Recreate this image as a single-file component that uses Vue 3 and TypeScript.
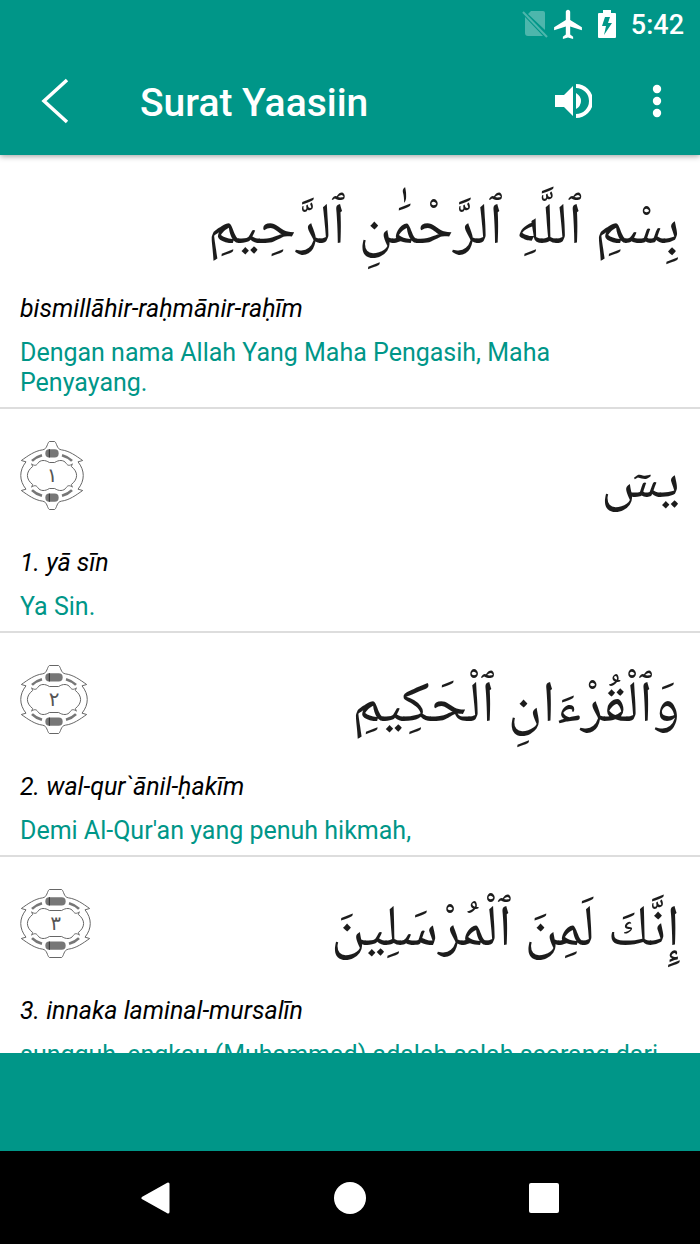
<script setup lang="ts">
interface Verse {
  marker: string
  frameWidth: number
  arabic: string
  latin: string
  meaning: string
}

const verses: Verse[] = [
  {
    marker: '',
    frameWidth: 0,
    arabic: 'بِسْمِ ٱللَّهِ ٱلرَّحْمَٰنِ ٱلرَّحِيمِ',
    latin: 'bismillāhir-raḥmānir-raḥīm',
    meaning: 'Dengan nama Allah Yang Maha Pengasih, Maha Penyayang.',
  },
  { marker: '١', frameWidth: 192, arabic: 'يسٓ', latin: '1. yā sīn', meaning: 'Ya Sin.' },
  {
    marker: '٢',
    frameWidth: 204,
    arabic: 'وَٱلْقُرْءَانِ ٱلْحَكِيمِ',
    latin: '2. wal-qur`ānil-ḥakīm',
    meaning: "Demi Al-Qur'an yang penuh hikmah,",
  },
  {
    marker: '٣',
    frameWidth: 213,
    arabic: 'إِنَّكَ لَمِنَ ٱلْمُرْسَلِينَ',
    latin: '3. innaka laminal-mursalīn',
    meaning: 'sungguh, engkau (Muhammad) adalah salah seorang dari rasul-rasul,',
  },
]

const halfOutline =
  'M88 1C81 6 82 24 68 26C44 29 24 44 4 58L18 62C-3 88 -3 118 18 144L4 148C24 162 44 177 68 180C82 182 81 200 88 205'
const halfInner =
  'M88 64C76 56 61 55 53 67C49 74 42 74 35 68L38 76C17 92 17 114 38 130L35 138C42 132 49 132 53 139C61 151 76 150 88 142'
</script>

<template>
  <div class="screen">
    <header class="top">
      <div class="status">
        <svg class="sim" viewBox="0 0 26 28" width="26" height="28" aria-hidden="true">
          <path d="M9 1H21Q23 1 23 3V20L6 4ZM3 7L21 26H6Q3 26 3 23Z" fill="currentColor" />
          <path d="M1 2L25 27" stroke="currentColor" stroke-width="2" />
        </svg>
        <svg class="plane" viewBox="2 1.5 19 20.5" width="28" height="30" aria-hidden="true">
          <path d="M21 16v-2l-8-5V3.500C13 2.670 12.330 2 11.500 2S10 2.670 10 3.500V9l-8 5v2l8-2.500V19l-2 1.500V22l3.500-1 3.500 1v-1.500L13 19v-5.500l8 2.500z" fill="#fff" />
        </svg>
        <svg class="battery" viewBox="0 0 18 30" width="18" height="30" aria-hidden="true">
          <path d="M5 1H13V4H17Q18 4 18 5V28Q18 29 17 29H1Q0 29 0 28V5Q0 4 1 4H5ZM12 8H7L4 17H8L6 26L14 14H10Z" fill="#fff" fill-rule="evenodd" />
        </svg>
        <time>5:42</time>
      </div>
      <div class="bar">
        <button class="back" aria-label="Kembali">
          <svg viewBox="0 0 28 46" width="28" height="46"><path d="M26 2L3 23L26 44" fill="none" stroke="#fff" stroke-width="3.500" /></svg>
        </button>
        <h1>Surat Yaasiin</h1>
        <button class="sound" aria-label="Putar suara">
          <svg viewBox="0 0 38 36" width="38" height="36">
            <path d="M1 12H10L19 3V33L10 24H1ZM22 10Q27 13 27 18T22 26Z" fill="#fff" />
            <path d="M22 3A15 15 0 0 1 22 33" fill="none" stroke="#fff" stroke-width="4" />
          </svg>
        </button>
        <button class="more" aria-label="Menu">
          <svg viewBox="0 0 10 34" width="10" height="34" fill="#fff">
            <circle cx="5" cy="5" r="4.200" /><circle cx="5" cy="17" r="4.200" /><circle cx="5" cy="29" r="4.200" />
          </svg>
        </button>
      </div>
    </header>

    <main class="list">
      <article v-for="verse in verses" :key="verse.latin" class="verse">
        <div class="scripture">
          <svg
            v-if="verse.marker"
            class="marker"
            :viewBox="`0 0 ${verse.frameWidth} 206`"
            :width="Math.round(verse.frameWidth / 3)"
            height="69"
          >
            <g fill="none" stroke="#666" stroke-width="3">
              <g v-for="side in 2" :key="side" :transform="side === 2 ? `translate(${verse.frameWidth} 0) scale(-1 1)` : undefined">
                <path :d="halfOutline" />
                <path :d="halfInner" />
                <path d="M36 59Q48 47 66 42M36 147Q48 159 66 164" stroke="#777" stroke-width="8" />
              </g>
              <path :d="`M88 1H${verse.frameWidth - 88}M88 64H${verse.frameWidth - 88}M88 142H${verse.frameWidth - 88}M88 205H${verse.frameWidth - 88}`" />
            </g>
            <g fill="#777">
              <rect x="76" y="24" :width="verse.frameWidth - 152" height="25" rx="12" />
              <rect x="76" y="157" :width="verse.frameWidth - 152" height="25" rx="12" />
            </g>
            <path d="M88 24V49M88 157V182" stroke="#333" stroke-width="3" />
            <text :x="verse.frameWidth / 2" y="122" text-anchor="middle" font-size="60" fill="#555">{{ verse.marker }}</text>
          </svg>
          <p class="arabic" lang="ar" dir="rtl">{{ verse.arabic }}</p>
        </div>
        <p class="latin">{{ verse.latin }}</p>
        <p class="meaning">{{ verse.meaning }}</p>
      </article>
    </main>

    <div class="banner"></div>

    <nav class="system">
      <button aria-label="Kembali">
        <svg viewBox="0 0 32 32" width="32" height="32"><path d="M28 2V30L3 16Z" fill="#fff" stroke="#fff" stroke-width="3" stroke-linejoin="round" /></svg>
      </button>
      <button aria-label="Beranda">
        <svg viewBox="0 0 32 32" width="32" height="32"><circle cx="16" cy="16" r="16" fill="#fff" /></svg>
      </button>
      <button aria-label="Aplikasi terbaru">
        <svg viewBox="0 0 32 32" width="32" height="32"><rect x="1" y="1" width="30" height="30" rx="2" fill="#fff" /></svg>
      </button>
    </nav>
  </div>
</template>

<style>
body {
  margin: 0;
}
</style>

<style scoped>
.screen {
  display: flex;
  flex-direction: column;
  height: 100vh;
  background: #fff;
  font-family: Roboto, "Noto Sans", sans-serif;
}
button {
  display: flex;
  align-items: center;
  justify-content: center;
  padding: 0;
  border: 0;
  background: none;
}
h1,
p {
  margin: 0;
}
.top {
  flex: none;
  position: relative;
  background: #009688;
  color: #fff;
  box-shadow: 0 1px 6px rgba(0, 0, 0, 0.4);
}
.status {
  display: flex;
  align-items: center;
  justify-content: flex-end;
  height: 47px;
  padding-right: 16px;
}
.sim {
  color: #4db6ac;
  margin-right: 6px;
}
.plane {
  margin-right: 16px;
}
.battery {
  margin-right: 15px;
}
time {
  font-size: 27px;
  font-weight: 500;
  line-height: 32px;
  padding-top: 2px;
}
.bar {
  display: flex;
  align-items: center;
  height: 108px;
}
.back {
  width: 110px;
  height: 100%;
}
h1 {
  flex: 1;
  padding: 4px 0 0 30px;
  font-size: 39px;
  font-weight: 500;
  line-height: 46px;
}
.sound {
  width: 82px;
  height: 100%;
}
.more {
  width: 86px;
  height: 100%;
}
.list {
  flex: 1;
  min-height: 0;
  overflow-y: auto;
  scrollbar-width: none;
}
.verse {
  padding: 0 20px 9px;
  border-bottom: 2px solid #ddd;
}
.scripture {
  display: flex;
  align-items: flex-start;
  justify-content: space-between;
  height: 139px;
}
.marker {
  flex: none;
  margin-top: 32px;
  font-family: "DejaVu Sans", sans-serif;
}
.arabic {
  margin-left: auto;
  padding-top: 31px;
  color: #1c1c1c;
  font-family: "Noto Naskh Arabic", Amiri, "DejaVu Sans", serif;
  font-size: 58px;
  line-height: 90px;
  white-space: nowrap;
}
.latin,
.meaning {
  font-size: 25px;
  line-height: 30px;
}
.latin {
  color: #000;
  font-style: italic;
}
.meaning {
  margin-top: 14px;
  color: #009688;
}
.banner {
  flex: none;
  height: 98px;
  background: #009688;
}
.system {
  flex: none;
  display: flex;
  align-items: center;
  justify-content: center;
  gap: 162px;
  height: 93px;
  background: #000;
}
</style>
